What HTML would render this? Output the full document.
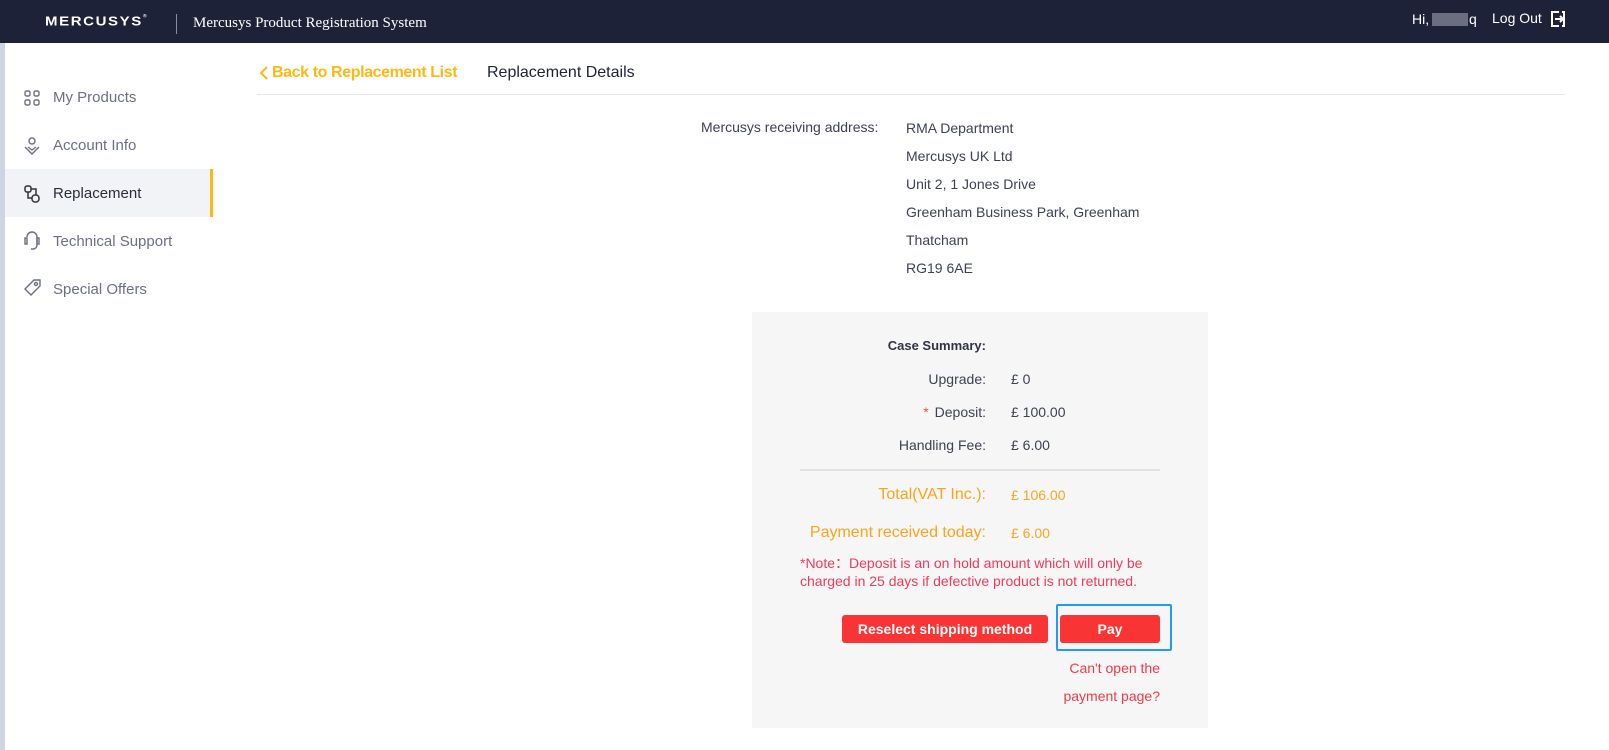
<!DOCTYPE html>
<html><head><meta charset="utf-8"><style>
*{margin:0;padding:0;box-sizing:border-box}
body{width:1609px;height:750px;overflow:hidden;background:#fff;font-family:"Liberation Sans",sans-serif;position:relative;color:#3c4250}
.a{position:absolute;white-space:nowrap}
.hdr{position:absolute;left:0;top:0;width:1609px;height:43px;background:#1e2238}
.strip{position:absolute;left:0;top:43px;width:5px;height:707px;background:#cdd5e4}
.menu{position:absolute;left:53px;font-size:15px;color:#6b7080;line-height:20px}
.ic{position:absolute;left:23px}
.lbl{position:absolute;right:623px;font-size:14px;text-align:right;line-height:18px}
.val{position:absolute;left:1011px;font-size:14px;line-height:18px}
.addr{position:absolute;left:906px;font-size:14px;line-height:18px;color:#3c4250}
</style></head><body>
<div class="hdr"></div>
<div class="a" style="left:45px;top:13px;color:#fff;font-weight:900;font-size:15px;letter-spacing:1.6px;transform:scaleY(0.85)">MERCUSYS<span style="font-size:5px;vertical-align:top">®</span></div>
<div class="a" style="left:176px;top:14px;width:1px;height:20px;background:#8a8ea0"></div>
<div class="a" style="left:193px;top:15px;color:#fff;font-family:'Liberation Serif',serif;font-size:15px">Mercusys Product Registration System</div>
<div class="a" style="left:1412px;top:11px;color:#fff;font-size:14px">Hi, I</div>
<div class="a" style="left:1432px;top:13px;width:36px;height:13px;background:#6a6e80"></div>
<div class="a" style="left:1469px;top:11px;color:#fff;font-size:14px">q</div>
<div class="a" style="left:1492px;top:10px;color:#fff;font-size:14px">Log Out</div>
<svg class="a" style="left:1549px;top:10px" width="18" height="18" viewBox="0 0 18 18" fill="none" stroke="#fff" stroke-width="2"><path d="M10 2H3v14h7M13 2h2v14h-2"/><path d="M6 9h8M11 6l3 3-3 3"/></svg>
<div class="strip"></div>
<div class="a" style="left:5px;top:169px;width:205px;height:48px;background:#f2f3f7"></div>
<div class="a" style="left:210px;top:169px;width:3px;height:48px;background:#fdb813"></div>
<svg class="ic" style="top:89px" width="18" height="18" viewBox="0 0 18 18" fill="none" stroke="#6b7080" stroke-width="1.4"><rect x="2" y="2" width="5" height="5" rx="1.5"/><rect x="11" y="2" width="5" height="5" rx="1.5"/><rect x="2" y="11" width="5" height="5" rx="1.5"/><rect x="11" y="11" width="5" height="5" rx="1.5"/></svg>
<div class="menu" style="top:88px">My Products</div>
<svg class="ic" style="top:136px" width="18" height="20" viewBox="0 0 18 20" fill="none" stroke="#6b7080" stroke-width="1.4"><circle cx="9" cy="5" r="3"/><path d="M2 11l7 7 7-7M5 11l4 3 4-3"/></svg>
<div class="menu" style="top:136px">Account Info</div>
<svg class="ic" style="top:184px" width="18" height="20" viewBox="0 0 18 20" fill="none" stroke="#333" stroke-width="1.5"><rect x="2" y="2" width="6" height="6" rx="2"/><rect x="9" y="11" width="7" height="7" rx="3"/><path d="M5 8v6h4M8 5h5v6"/></svg>
<div class="menu" style="top:184px;color:#2a2e3a">Replacement</div>
<svg class="ic" style="top:230px" width="18" height="22" viewBox="0 0 18 22" fill="none" stroke="#6b7080" stroke-width="1.4"><path d="M4 7a5 5 0 0110 0v8a4 4 0 01-4 4H8"/><path d="M4 8H2v6h2zM14 8h2v6h-2z"/></svg>
<div class="menu" style="top:232px">Technical Support</div>
<svg class="ic" style="top:278px" width="20" height="20" viewBox="0 0 20 20" fill="none" stroke="#6b7080" stroke-width="1.4"><path d="M11 2h6v6l-9 9-6-6z"/><circle cx="13" cy="6" r="1.5"/></svg>
<div class="menu" style="top:280px">Special Offers</div>
<svg class="a" style="left:260px;top:66px" width="8" height="14" viewBox="0 0 8 14" fill="none" stroke="#fdb813" stroke-width="2"><path d="M7 1L1 7l6 6"/></svg>
<div class="a" style="left:272px;top:64px;color:#fdb813;font-size:16px;font-weight:bold;letter-spacing:-0.4px">Back to Replacement List</div>
<div class="a" style="left:487px;top:64px;color:#1e2238;font-size:16px">Replacement Details</div>
<div class="a" style="left:257px;top:94px;width:1308px;height:1px;background:#e4e6ea"></div>
<div class="a" style="left:701px;top:119px;font-size:14px">Mercusys receiving address:</div>
<div class="addr" style="top:119px">RMA Department</div>
<div class="addr" style="top:147px">Mercusys UK Ltd</div>
<div class="addr" style="top:175px">Unit 2, 1 Jones Drive</div>
<div class="addr" style="top:203px">Greenham Business Park, Greenham</div>
<div class="addr" style="top:231px">Thatcham</div>
<div class="addr" style="top:259px">RG19 6AE</div>
<div class="a" style="left:752px;top:312px;width:456px;height:416px;background:#f6f6f6"></div>
<div class="lbl" style="top:337px;font-weight:bold;color:#2f3440;font-size:13px">Case Summary:</div>
<div class="lbl" style="top:370px">Upgrade:</div>
<div class="val" style="top:370px">£ 0</div>
<div class="lbl" style="top:403px"><span style="color:#f04a4a;margin-right:6px">*</span>Deposit:</div>
<div class="val" style="top:403px">£ 100.00</div>
<div class="lbl" style="top:436px">Handling Fee:</div>
<div class="val" style="top:436px">£ 6.00</div>
<div class="a" style="left:800px;top:469px;width:360px;height:2px;background:#e2e2e2"></div>
<div class="lbl" style="top:485px;font-size:16px;color:#f8a51c;line-height:20px">Total(VAT Inc.):</div>
<div class="val" style="top:486px;color:#f8a51c">£ 106.00</div>
<div class="lbl" style="top:523px;font-size:16px;color:#f8a51c;line-height:20px">Payment received today:</div>
<div class="val" style="top:524px;color:#f8a51c">£ 6.00</div>
<div class="a" style="left:800px;top:554px;font-size:14px;line-height:18px;color:#f03a5a">*Note：Deposit is an on hold amount which will only be<br>charged in 25 days if defective product is not returned.</div>
<div class="a" style="left:842px;top:615px;width:206px;height:28px;background:#f93434;border-radius:3px;color:#fff;font-weight:bold;font-size:14px;text-align:center;line-height:28px">Reselect shipping method</div>
<div class="a" style="left:1056px;top:604px;width:116px;height:47px;border:2px solid #1e9bff;border-radius:2px"></div>
<div class="a" style="left:1060px;top:615px;width:100px;height:28px;background:#f93434;border-radius:3px;color:#fff;font-weight:bold;font-size:14px;text-align:center;line-height:28px">Pay</div>
<div class="a" style="right:449px;top:654px;font-size:14px;color:#f03a4a;text-align:right;line-height:28px">Can't open the<br>payment page?</div>
</body></html>
